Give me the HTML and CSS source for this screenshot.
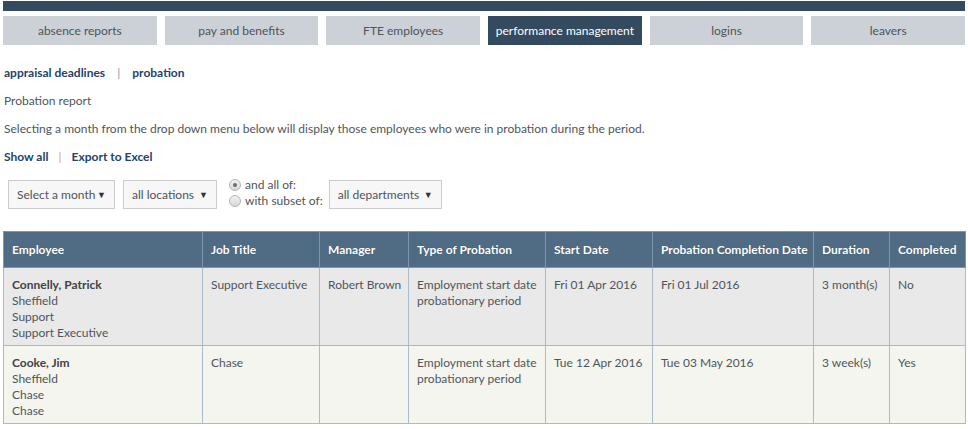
FILE: index.html
```html
<!DOCTYPE html>
<html lang="en">
<head>
    <meta charset="UTF-8">
    <title>Probation report</title>
    <link rel="stylesheet" href="styles.css">
</head>
<body>
    <div class="page">
        <!-- top bar -->
        <div class="topbar"></div>

        <!-- main tabs -->
        <div class="tabs">
            <a class="tab">absence reports</a>
            <a class="tab">pay and benefits</a>
            <a class="tab">FTE employees</a>
            <a class="tab active">performance management</a>
            <a class="tab">logins</a>
            <a class="tab">leavers</a>
        </div>

        <div class="subnav">
            <a class="link">appraisal deadlines</a>
            <span class="sep">|</span>
            <a class="link">probation</a>
        </div>

        <p class="line">Probation report</p>
        <p class="line">Selecting a month from the drop down menu below will display those employees who were in probation during the period.</p>

        <div class="actions">
            <a class="link">Show all</a>
            <span class="sep orange">|</span>
            <a class="link">Export to Excel</a>
        </div>

        <!-- filters -->
        <div class="filters">
            <div class="select sel-month">Select a month <span class="caret">&#9660;</span></div>
            <div class="select sel-loc">all locations <span class="caret">&#9660;</span></div>
            <div class="radios">
                <label><span class="radio checked"></span>and all of:</label>
                <label><span class="radio"></span>with subset of:</label>
            </div>
            <div class="select sel-dep">all departments <span class="caret">&#9660;</span></div>
        </div>

        <table class="report">
            <colgroup>
                <col class="c-emp">
                <col class="c-job">
                <col class="c-man">
                <col class="c-type">
                <col class="c-start">
                <col class="c-comp">
                <col class="c-dur">
                <col class="c-done">
            </colgroup>
            <thead>
                <tr>
                    <th>Employee</th>
                    <th>Job Title</th>
                    <th>Manager</th>
                    <th>Type of Probation</th>
                    <th>Start Date</th>
                    <th>Probation Completion Date</th>
                    <th>Duration</th>
                    <th>Completed</th>
                </tr>
            </thead>
            <tbody>
                <tr class="odd">
                    <td><b>Connelly, Patrick</b><br>Sheffield<br>Support<br>Support Executive</td>
                    <td>Support Executive</td>
                    <td>Robert Brown</td>
                    <td>Employment start date probationary period</td>
                    <td>Fri 01 Apr 2016</td>
                    <td>Fri 01 Jul 2016</td>
                    <td>3 month(s)</td>
                    <td>No</td>
                </tr>
                <tr class="even">
                    <td><b>Cooke, Jim</b><br>Sheffield<br>Chase<br>Chase</td>
                    <td>Chase</td>
                    <td></td>
                    <td>Employment start date probationary period</td>
                    <td>Tue 12 Apr 2016</td>
                    <td>Tue 03 May 2016</td>
                    <td>3 week(s)</td>
                    <td>Yes</td>
                </tr>
            </tbody>
        </table>
    </div>
</body>
</html>
```

FILE: styles.css
```css
body {
    margin: 0;
    font-family: Lato, "Noto Sans", sans-serif;
    font-size: 12px;
    color: #50555b;
    background: #ffffff;
}
.page {
    padding: 1px 3px 0 3px;
}
.topbar {
    height: 10px;
    background-color: #344a5e;
}
.tabs {
    display: flex;
    gap: 8px;
    margin-top: 5px;
}
.tab {
    flex: 1;
    height: 29px;
    line-height: 29px;
    text-align: center;
    background-color: #ccd0d7;
    color: #4e545a;
    font-size: 12px;
    white-space: nowrap;
}
.tab.active {
    background-color: #344a5e;
    color: #ffffff;
}
.subnav {
    margin-top: 20px;
    height: 16px;
    line-height: 16px;
    padding-left: 1px;
}
.link {
    color: #24426c;
    font-weight: bold;
}
.sep {
    color: #7d93ad;
    margin: 0 9px;
}
.sep.orange {
    color: #e0a15c;
    margin: 0 7px;
}
.line {
    margin: 12px 0 0 1px;
    height: 16px;
    line-height: 16px;
}
.actions {
    margin-top: 12px;
    height: 16px;
    line-height: 16px;
    padding-left: 1px;
}
.filters {
    display: flex;
    align-items: center;
    margin-top: 14px;
    padding-left: 5px;
    height: 30px;
}
.select {
    height: 29px;
    line-height: 27px;
    border: 1px solid #cccccc;
    background-color: #f7f7f7;
    color: #4e545a;
    padding: 0 8px 0 8px;
    margin-right: 8px;
    box-sizing: border-box;
    display: flex;
    justify-content: space-between;
    white-space: nowrap;
}
.caret {
    font-size: 9px;
    color: #333333;
}
.sel-month { width: 107px; }
.sel-loc { width: 94px; margin-right: 12px; }
.sel-dep { width: 113px; margin-left: 6px; }
.radios {
    display: flex;
    flex-direction: column;
    line-height: 16px;
    margin-top: -2px;
    white-space: nowrap;
}
.radios label {
    display: flex;
    align-items: center;
}
.radio {
    width: 10px;
    height: 10px;
    border: 1px solid #b5b5b5;
    border-radius: 50%;
    background: linear-gradient(#f2f2f2, #d8d8d8);
    margin-right: 4px;
    position: relative;
}
.radio.checked::after {
    content: "";
    position: absolute;
    left: 3px;
    top: 3px;
    width: 4px;
    height: 4px;
    border-radius: 50%;
    background: #6b6b6b;
}
.report {
    margin-top: 22px;
    width: 962px;
    border-collapse: collapse;
    table-layout: fixed;
    border: 1px solid #a9bacb;
}
.c-emp { width: 199px; }
.c-job { width: 117px; }
.c-man { width: 89px; }
.c-type { width: 137px; }
.c-start { width: 107px; }
.c-comp { width: 161px; }
.c-dur { width: 76px; }
.c-done { width: 76px; }
.report th {
    background-color: #506b84;
    color: #ffffff;
    font-weight: bold;
    text-align: left;
    height: 35px;
    padding: 0 8px;
    border: 1px solid #7f95aa;
    white-space: nowrap;
    text-shadow: 0 0 1px rgba(0, 0, 0, 0.3);
}
.report td {
    vertical-align: top;
    padding: 9px 4px 4px 8px;
    line-height: 16px;
    border: 1px solid #a9bacb;
}
.report tr.odd td {
    background-color: #e9e9e9;
}
.report tr.even td {
    background-color: #f4f5ef;
}
.report td b {
    color: #3f4348;
}
```
